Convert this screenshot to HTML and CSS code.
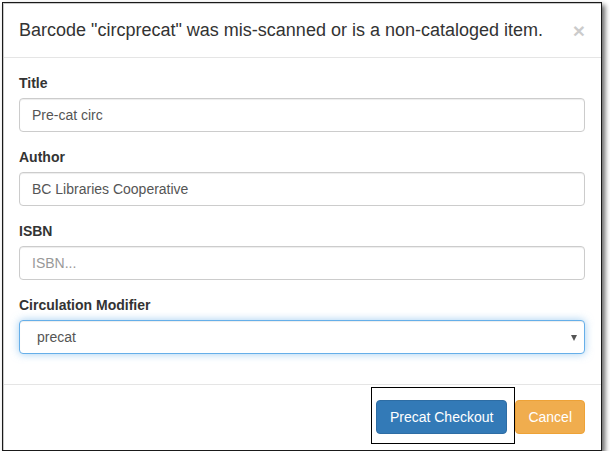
FILE: index.html
```html
<!DOCTYPE html>
<html>
<head>
<meta charset="utf-8">
<link rel="stylesheet" href="styles.css">
</head>
<body>
<div class="frame">
  <div class="modal">
    <div class="modal-header">
      <h4 class="modal-title">Barcode "circprecat" was mis-scanned or is a non-cataloged item.</h4>
      <span class="close">×</span>
    </div>
    <div class="modal-body">
      <div class="form-group">
        <label>Title</label>
        <input class="form-control" type="text" value="Pre-cat circ">
      </div>
      <div class="form-group">
        <label>Author</label>
        <input class="form-control" type="text" value="BC Libraries Cooperative">
      </div>
      <div class="form-group">
        <label>ISBN</label>
        <input class="form-control" type="text" placeholder="ISBN...">
      </div>
      <div class="form-group">
        <label>Circulation Modifier</label>
        <div class="select-wrap">
          <select class="form-control select-focus">
            <option>precat</option>
          </select>
        </div>
      </div>
    </div>
    <div class="modal-footer">
      <button class="btn btn-primary">Precat Checkout</button>
      <button class="btn btn-warning">Cancel</button>
    </div>
  </div>
  <div class="highlight"></div>
</div>
</body>
</html>
```
FILE: styles.css
```css
* { box-sizing: border-box; }
html, body { margin: 0; padding: 0; background: #fff; }
body {
  font-family: "Liberation Sans", Arial, sans-serif;
  font-size: 14px;
  color: #333;
  padding: 2px 0 0 2px;
}
.frame {
  position: relative;
  width: 600px;
  height: 449px;
  border: 1px solid #1a1a1a;
  box-shadow: 3px 3px 5px rgba(0,0,0,0.6);
  background: #fff;
}
.modal {
  height: 100%;
  border: 1px solid #c8c8c8;
  border-right: 0;
  border-bottom: 0;
  display: flex;
  flex-direction: column;
}
.modal-header {
  display: flex;
  justify-content: space-between;
  align-items: flex-start;
  padding: 15px 15px 15px 15px;
  border-bottom: 1px solid #e5e5e5;
}
.modal-title {
  margin: 0;
  font-size: 18px;
  font-weight: normal;
  line-height: 23px;
}
.close {
  font-size: 21px;
  font-weight: bold;
  line-height: 1;
  color: #000;
  opacity: 0.2;
  margin-top: 1px;
  margin-right: 1px;
}
.modal-body {
  padding: 15px 15px 0 15px;
}
.form-group {
  margin-bottom: 15px;
  display: flex;
  flex-direction: column;
}
label {
  font-weight: bold;
  line-height: 20px;
  margin-bottom: 5px;
}
.form-control {
  height: 34px;
  width: 566px;
  padding: 6px 12px;
  font-family: "Liberation Sans", Arial, sans-serif;
  font-size: 14px;
  color: #555;
  background: #fff;
  border: 1px solid #ccc;
  border-radius: 4px;
  box-shadow: inset 0 1px 1px rgba(0,0,0,0.075);
  outline: none;
}
.form-control::placeholder { color: #999; }
.select-wrap { position: relative; width: 566px; }
.select-focus {
  -webkit-appearance: none;
  appearance: none;
  padding-left: 17px;
  border-color: #66afe9;
  box-shadow: inset 0 1px 1px rgba(0,0,0,0.075), 0 0 8px rgba(102,175,233,0.6);
}
.select-wrap::after {
  content: "";
  position: absolute;
  right: 8px;
  top: 15px;
  border-left: 3px solid transparent;
  border-right: 3px solid transparent;
  border-top: 6px solid #555;
}
.modal-footer {
  margin-top: 15px;
  border-top: 1px solid #e5e5e5;
  padding: 15px 16px 15px 15px;
  display: flex;
  justify-content: flex-end;
  gap: 8px;
}
.btn {
  height: 34px;
  padding: 6px 12px;
  font-family: "Liberation Sans", Arial, sans-serif;
  font-size: 14px;
  line-height: 20px;
  border-radius: 4px;
  color: #fff;
  border: 1px solid transparent;
}
.btn-primary { background: #337ab7; border-color: #2e6da4; padding: 6px 13px; }
.btn-warning { background: #f0ad4e; border-color: #eea236; }
.highlight {
  position: absolute;
  left: 368px;
  top: 384px;
  width: 144px;
  height: 57px;
  border: 1px solid #000;
}
```
